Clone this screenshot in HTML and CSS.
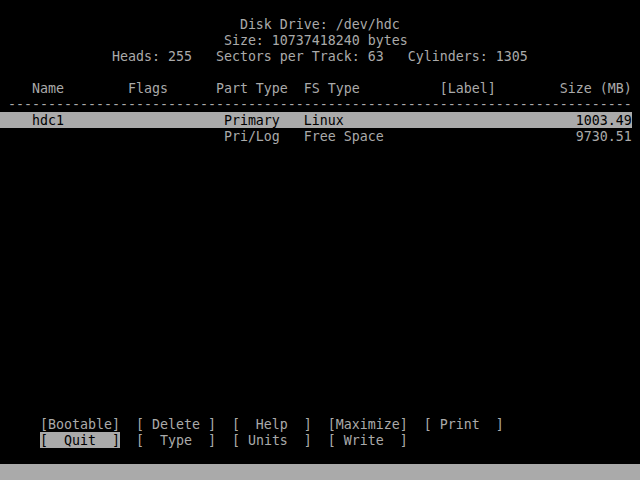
FILE: index.html
```html
<!DOCTYPE html>
<html>
<head>
<meta charset="utf-8">
<link rel="stylesheet" href="styles.css">
</head>
<body>
<div class="screen">
<div class="row"> </div>
<div class="row">                              Disk Drive: /dev/hdc</div>
<div class="row">                            Size: 10737418240 bytes</div>
<div class="row">              Heads: 255   Sectors per Track: 63   Cylinders: 1305</div>
<div class="row"> </div>
<div class="row">    Name        Flags      Part Type  FS Type          [Label]        Size (MB)</div>
<div class="row"> ------------------------------------------------------------------------------</div>
<div class="row"><span class="sel">    hdc1                    Primary   Linux                             1003.49</span></div>
<div class="row">                            Pri/Log   Free Space                        9730.51</div>
<div class="fill"></div>
<div class="row">     [Bootable]  [ Delete ]  [  Help  ]  [Maximize]  [ Print  ]</div>
<div class="row">     <span class="sel">[  Quit  ]</span>  [  Type  ]  [ Units  ]  [ Write  ]</div>
<div class="row"> </div>
<div class="row status"> </div>
</div>
</body>
</html>
```

FILE: styles.css
```css
html, body {
  margin: 0;
  padding: 0;
  background: #000;
}
.screen {
  width: 640px;
  height: 480px;
  display: flex;
  flex-direction: column;
  background: #000;
  color: #aaaaaa;
  font-family: "DejaVu Sans Mono", monospace;
  font-size: 13.29px;
  overflow: hidden;
}
.row {
  height: 16px;
  line-height: 18px;
  white-space: pre;
  flex: none;
}
.fill {
  flex: 1;
}
.sel {
  display: inline-block;
  vertical-align: top;
  height: 16px;
  line-height: 18px;
  background: #aaaaaa;
  color: #000;
}
.status {
  background: #aaaaaa;
}
```
